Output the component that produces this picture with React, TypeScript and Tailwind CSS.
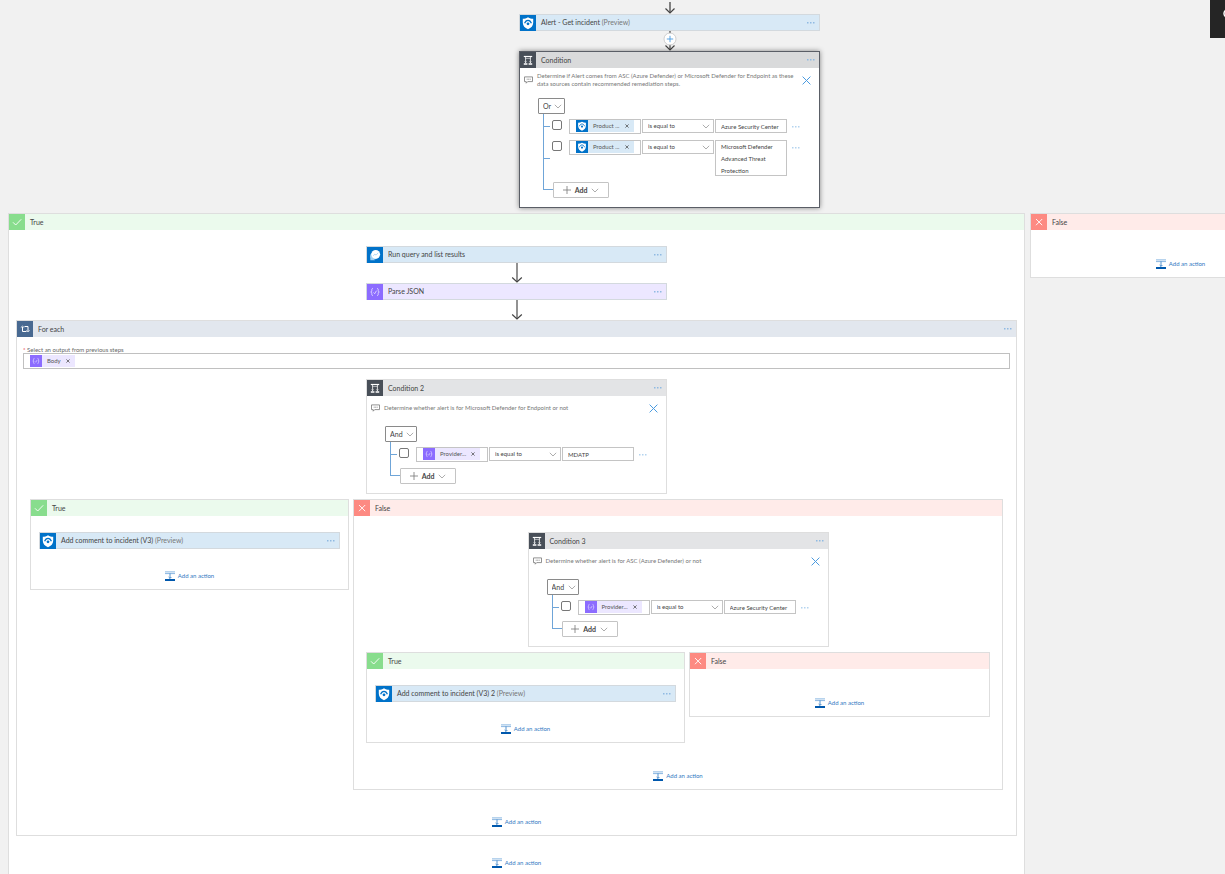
import React, { useId } from "react";

type Connector = "sentinel" | "monitor" | "json";

function SentinelIcon({ className }: { className: string }) {
  return (
    <svg viewBox="0 0 16 16" className={className} aria-hidden="true">
      <rect width="16" height="16" fill="#0072c9" />
      <path d="M8 2.2c1.6 1 3.3 1.5 5.2 1.5v4.1c0 3-2 5.200-5.200 6.500-3.200-1.300-5.200-3.500-5.200-6.500V3.700c1.900 0 3.600-.5 5.200-1.500z" fill="#fff" />
      <path d="M4.600 8.300C5.300 6.300 6.500 5.300 8 5.300s2.700 1 3.400 3" fill="none" stroke="#0072c9" strokeWidth="1.200" />
      <circle cx="8" cy="8.800" r="1.400" fill="#0072c9" />
    </svg>
  );
}

function MonitorIcon({ className }: { className: string }) {
  return (
    <svg viewBox="0 0 16 16" className={className} aria-hidden="true">
      <rect width="16" height="16" fill="#0072c9" />
      <path d="M3.300 8.500v4.700h4.700z" fill="#9fd0f2" />
      <circle cx="6.800" cy="9" r="3.600" fill="#9fd0f2" />
      <circle cx="8.700" cy="7.300" r="4.400" fill="#fff" />
      <path d="M6.300 8.800l1.500-1.700 1.300 1 2-2.300" fill="none" stroke="#9fd0f2" strokeWidth=".8" />
    </svg>
  );
}

function JsonIcon({ className }: { className: string }) {
  return (
    <svg viewBox="0 0 16 16" className={className} aria-hidden="true">
      <rect width="16" height="16" fill="#8c6cff" />
      <g fill="none" stroke="#fff" strokeWidth=".8" opacity=".85">
        <path d="M6 4.500c-1.200 0-1.200.5-1.200 1.500S4.800 8 3.700 8c1.100 0 1.100 1 1.100 2s0 1.500 1.200 1.500" />
        <path d="M10 4.500c1.200 0 1.200.5 1.200 1.500s0 2 1.100 2c-1.100 0-1.100 1-1.100 2s0 1.500-1.200 1.500" />
        <path d="M6.500 8.500l1.200 1.200 1.800-3" />
      </g>
    </svg>
  );
}

function ConditionIcon() {
  return (
    <svg viewBox="0 0 16 16" className="size-4 shrink-0" aria-hidden="true">
      <rect width="16" height="16" fill="#484f58" />
      <g fill="none" stroke="#fff">
        <path d="M3.800 4.500h8.400" strokeWidth="1.200" />
        <path d="M5.600 5v6M10.400 5v6" strokeWidth=".8" />
        <path d="M5.600 6.500h4.800" strokeWidth=".5" />
        <path d="M4.500 9.300l1.100 1.200 1.100-1.200M9.300 9.300l1.100 1.200 1.100-1.200" strokeWidth=".5" />
        <path d="M3.800 12h3.600M8.600 12h3.600" strokeWidth="1.500" />
      </g>
    </svg>
  );
}

function LoopIcon() {
  return (
    <svg viewBox="0 0 16 16" className="size-4 shrink-0" aria-hidden="true">
      <rect width="16" height="16" fill="#486991" />
      <g fill="none" stroke="#fff">
        <path d="M5.500 6v4.500h4M7.500 5.500h3.500v4.500" strokeWidth="1" />
        <path d="M3.800 6.500l1.700-1.300 1.700 1.300M9.300 9.500L11 10.800l1.700-1.300" strokeWidth=".8" />
      </g>
    </svg>
  );
}

function AddActionIcon() {
  return (
    <svg viewBox="0 0 10 10" className="h-[10px] w-[10px] shrink-0" aria-hidden="true">
      <path d="M0 .9h10M0 2.600h10" stroke="#6ba3d9" strokeWidth=".8" />
      <path d="M5 2.500v5M3.600 6L5 7.400 6.400 6" fill="none" stroke="#2f78c2" strokeWidth=".8" />
      <rect y="8" width="10" height="2" fill="#0058ad" />
    </svg>
  );
}

function Chevron({ className }: { className: string }) {
  return (
    <svg viewBox="0 0 8 5" className={className} fill="none" stroke="#8a8a8a" strokeWidth=".7" aria-hidden="true">
      <path d="M.8.8L4 4l3.200-3.200" />
    </svg>
  );
}

function MoreButton({ className = "", tone = "text-[#8fbae2]" }: { className?: string; tone?: string }) {
  return (
    <button type="button" aria-label="More commands" className={`flex shrink-0 items-center ${tone} ${className}`}>
      <svg viewBox="0 0 8 2" className="h-[2px] w-2" fill="currentColor" aria-hidden="true">
        <rect x="0" y="0" width="1.500" height="1.500" />
        <rect x="3" y="0" width="1.500" height="1.500" />
        <rect x="6" y="0" width="1.500" height="1.500" />
      </svg>
    </button>
  );
}

function ShortArrow() {
  return (
    <svg viewBox="0 0 12 14" className="h-[14px] w-3" fill="none" stroke="#444" aria-hidden="true">
      <path d="M6 2v11" strokeWidth="1.300" />
      <path d="M1.500 8.500L6 13l4.500-4.500" strokeWidth="1.200" />
    </svg>
  );
}

function Arrow() {
  return (
    <svg viewBox="0 0 12 20" className="h-5 w-3 shrink-0" fill="none" stroke="#444" aria-hidden="true">
      <path d="M6 0v19" stroke="#777" strokeWidth="1.600" />
      <path d="M1.200 14.500L6 19l4.800-4.500" strokeWidth="1.200" />
    </svg>
  );
}

function InsertStep() {
  return (
    <button type="button" aria-label="Insert a new step" className="h-5 w-[14px]">
      <svg viewBox="0 0 14 20" className="h-5 w-[14px]" fill="none" stroke="#444" aria-hidden="true">
        <path d="M7 0v19" strokeWidth="1.200" />
        <path d="M2.500 14.500L7 19l4.500-4.500" strokeWidth="1.200" />
        <circle cx="7" cy="8" r="6" fill="#fff" stroke="#c4c4c4" strokeWidth=".8" />
        <path d="M7 4.800v6.400M3.800 8h6.400" stroke="#4a9be0" strokeWidth=".9" />
      </svg>
    </button>
  );
}

const cardTone: Record<Connector, string> = {
  sentinel: "bg-[#d8e9f6]",
  monitor: "bg-[#d8e9f6]",
  json: "bg-[#ece7ff]",
};

function ConnectorIcon({ kind, className }: { kind: Connector; className: string }) {
  if (kind === "sentinel") return <SentinelIcon className={className} />;
  if (kind === "monitor") return <MonitorIcon className={className} />;
  return <JsonIcon className={className} />;
}

function ActionCard({ kind, title, preview }: { kind: Connector; title: string; preview?: boolean }) {
  return (
    <div className={`flex h-[17px] w-[301px] items-stretch border border-[#d3d9de] ${cardTone[kind]}`}>
      <ConnectorIcon kind={kind} className="-mb-px size-4 shrink-0" />
      <h3 className="flex-1 pl-[5px] text-[7px] leading-[15px] text-[#444]">
        {title} {preview && <span className="text-[#777]">(Preview)</span>}
      </h3>
      <MoreButton className="mr-1" />
    </div>
  );
}

function AddAction({ className = "" }: { className?: string }) {
  return (
    <button type="button" className={`flex h-3 items-center gap-[3px] text-[6px] leading-3 text-[#2f78c2] ${className}`}>
      <AddActionIcon />
      <span>Add an action</span>
    </button>
  );
}

function Branch({
  outcome,
  children,
  className = "",
}: {
  outcome: "True" | "False";
  children: React.ReactNode;
  className?: string;
}) {
  const ok = outcome === "True";
  return (
    <section className={`border border-[#dedede] bg-white ${className}`}>
      <header className={`flex h-4 items-center ${ok ? "bg-[#ebfaed]" : "bg-[#ffebe9]"}`}>
        <svg viewBox="0 0 16 16" className="size-4 shrink-0" fill="none" stroke="#fff" strokeWidth=".9" aria-hidden="true">
          <rect width="16" height="16" fill={ok ? "#88dd8d" : "#fd8a82"} stroke="none" />
          <path d={ok ? "M4 8.300l2.700 2.700 5.500-5.700" : "M5 5l6.200 6.200M11.200 5L5 11.200"} />
        </svg>
        <h2 className="pl-[5px] text-[7px] leading-4 text-[#444]">{outcome}</h2>
      </header>
      <div className="flex flex-col items-center px-2 pt-4 pb-[7px]">{children}</div>
    </section>
  );
}

function Token({ kind, label }: { kind: Connector; label: string }) {
  return (
    <span className={`flex h-3 shrink-0 items-center text-[6px] leading-3 text-[#555] ${cardTone[kind]}`}>
      <ConnectorIcon kind={kind} className="size-3" />
      <span className="pl-[5px]">{label}</span>
      <button type="button" aria-label={`Remove ${label}`} className="px-[5px]">
        <svg viewBox="0 0 4 4" className="size-1" stroke="#444" strokeWidth=".7" aria-hidden="true">
          <path d="M.4.4l3.200 3.200M3.600.4L.4 3.600" />
        </svg>
      </button>
    </span>
  );
}

interface Rule {
  kind: Connector;
  token: string;
  value: string;
  lines?: number;
}

function RuleRow({ rule }: { rule: Rule }) {
  const box = "w-[72px] border border-[#c4c4c4] bg-white px-[5px] text-[6px] text-[#444]";
  return (
    <div className="flex items-start">
      <span className="mr-[2px] h-px w-[6px] self-center bg-[#6fa5d8]" />
      <input type="checkbox" aria-label="Select row" className="mt-px size-[10px] appearance-none rounded-[2px] border border-[#777] bg-white" />
      <div className="ml-[7px] flex items-start gap-px">
        <div className="flex h-[15px] w-[72px] border border-[#c4c4c4] bg-white pl-[6px]">
          <Token kind={rule.kind} label={rule.token} />
          <input aria-label="Left operand" className="min-w-0 flex-1 text-[6px]" />
        </div>
        <div className="relative">
          <select aria-label="Operator" className={`${box} block h-[14px] appearance-none leading-3`}>
            <option>is equal to</option>
          </select>
          <Chevron className="pointer-events-none absolute top-[5px] right-1 h-[5px] w-2" />
        </div>
        {rule.lines ? (
          <textarea
            aria-label="Value"
            rows={rule.lines}
            defaultValue={rule.value}
            className={`${box} block h-9 resize-none overflow-hidden leading-3`}
          />
        ) : (
          <input aria-label="Value" defaultValue={rule.value} className={`${box} block h-[14px] leading-3`} />
        )}
      </div>
      <MoreButton className="ml-[5px] h-[15px]" tone="text-[#b4d4ef]" />
    </div>
  );
}

function ConditionCard({
  title,
  note,
  group,
  rules,
  selected,
}: {
  title: string;
  note: string;
  group: "And" | "Or";
  rules: Rule[];
  selected?: boolean;
}) {
  return (
    <section
      className={`w-[301px] border bg-white pb-[9px] ${
        selected ? "border-[#5a5e66] shadow-[0_0_5px_rgba(0,0,0,0.45)]" : "border-[#dedede]"
      }`}
    >
      <header className={`flex h-4 items-center ${selected ? "bg-[#d9dadb]" : "bg-[#e3e4e6]"}`}>
        <ConditionIcon />
        <h2 className="flex-1 pl-[5px] text-[7px] leading-4 text-[#444]">{title}</h2>
        <MoreButton className="mr-1" />
      </header>
      <div className="flex h-6 items-center pr-2 pl-1">
        <svg viewBox="0 0 9 8" className="mr-1 h-2 w-[9px] shrink-0" fill="none" stroke="#777" strokeWidth=".8" aria-hidden="true">
          <path d="M.5.900h8v4.700H3.700L2.200 7.200V5.600H.5z" />
          <path d="M2.700 3.200h1M4.200 3.200h1M5.700 3.200h1" />
        </svg>
        <p className="flex-1 text-[6px] leading-2 text-[#777]">{note}</p>
        <button type="button" aria-label="Delete comment" className="shrink-0">
          <svg viewBox="0 0 9 9" className="size-[9px]" stroke="#4a9be0" strokeWidth="1" aria-hidden="true">
            <path d="M.6.6l7.800 7.800M8.400.6L.6 8.400" />
          </svg>
        </button>
      </div>
      <div className="pt-[6px] pl-[18px]">
        <div className="relative w-max">
          <select
            aria-label="Group operator"
            defaultValue={group}
            className={`block h-4 appearance-none rounded-[1px] border border-[#8a8a8a] bg-white pl-1 text-[7px] leading-[14px] text-[#444] ${
              group === "And" ? "w-8" : "w-[27px]"
            }`}
          >
            <option>And</option>
            <option>Or</option>
          </select>
          <Chevron className="pointer-events-none absolute top-[6px] right-[3px] h-[5px] w-2" />
        </div>
        <div className="ml-[5px]">
          <div className="flex flex-col gap-[6px] border-l border-[#6fa5d8] pt-[5px]">
            {rules.map((rule, i) => (
              <RuleRow key={i} rule={rule} />
            ))}
          </div>
          <div className="flex items-start">
            <span className="h-[14px] w-[10px] border-b border-l border-[#6fa5d8]" />
            <button
              type="button"
              className="mt-[6px] flex h-4 w-14 items-center justify-center gap-1 rounded-[1px] border border-[#c4c4c4] bg-white text-[7px] leading-[14px] font-bold text-[#444]"
            >
              <svg viewBox="0 0 8 8" className="size-2" stroke="#777" strokeWidth=".8" aria-hidden="true">
                <path d="M4 0v8M0 4h8" />
              </svg>
              <span>Add</span>
              <Chevron className="h-[5px] w-2" />
            </button>
          </div>
        </div>
      </div>
    </section>
  );
}

function ForEach({ children }: { children: React.ReactNode }) {
  const id = useId();
  return (
    <section className="border border-[#dedede] bg-white">
      <header className="flex h-4 items-center bg-[#e2e7ee]">
        <LoopIcon />
        <h2 className="flex-1 pl-[5px] text-[7px] leading-4 text-[#444]">For each</h2>
        <MoreButton className="mr-1" />
      </header>
      <div className="px-[6px] pt-[9px]">
        <label htmlFor={id} className="block text-[6px] leading-[7px] text-[#666]">
          <span className="text-[#e81123]">* </span>Select an output from previous steps
        </label>
        <div className="flex h-4 items-center border border-[#c0c0c0] pl-[6px]">
          <Token kind="json" label="Body" />
          <input id={id} className="min-w-0 flex-1 text-[6px] outline-none" />
        </div>
      </div>
      <div className="flex flex-col items-center px-[13px] pt-[10px] pb-[7px]">{children}</div>
    </section>
  );
}

export default function App() {
  return (
    <main className="relative h-screen overflow-hidden bg-[#f1f1f1] font-['Lato','Open_Sans',sans-serif]">
      <div className="flex w-max flex-col items-center pl-2">
        <ShortArrow />
        <ActionCard kind="sentinel" title="Alert - Get incident" preview />
        <InsertStep />
        <ConditionCard
          selected
          title="Condition"
          note="Determine if Alert comes from ASC (Azure Defender) or Microsoft Defender for Endpoint as these data sources contain recommended remediation steps."
          group="Or"
          rules={[
            { kind: "sentinel", token: "Product ...", value: "Azure Security Center" },
            { kind: "sentinel", token: "Product ...", value: "Microsoft Defender Advanced Threat Protection", lines: 3 },
          ]}
        />
        <div className="flex items-start gap-[5px] pt-[5px]">
          <section>
            <Branch outcome="True" className="[&>div]:px-[7px]">
              <ActionCard kind="monitor" title="Run query and list results" />
              <Arrow />
              <ActionCard kind="json" title="Parse JSON" />
              <Arrow />
              <ForEach>
                <ConditionCard
                  title="Condition 2"
                  note="Determine whether alert is for Microsoft Defender for Endpoint or not"
                  group="And"
                  rules={[{ kind: "json", token: "Provider...", value: "MDATP" }]}
                />
                <div className="flex items-start gap-1 pt-[5px]">
                  <Branch outcome="True">
                    <ActionCard kind="sentinel" title="Add comment to incident (V3)" preview />
                    <AddAction className="mt-[21px]" />
                  </Branch>
                  <Branch outcome="False" className="[&>div]:px-3">
                    <ConditionCard
                      title="Condition 3"
                      note="Determine whether alert is for ASC (Azure Defender) or not"
                      group="And"
                      rules={[{ kind: "json", token: "Provider...", value: "Azure Security Center" }]}
                    />
                    <div className="flex items-start gap-1 pt-[5px]">
                      <Branch outcome="True">
                        <ActionCard kind="sentinel" title="Add comment to incident (V3) 2" preview />
                        <AddAction className="mt-[21px]" />
                      </Branch>
                      <Branch outcome="False" className="w-[301px]">
                        <AddAction className="mt-3" />
                      </Branch>
                    </div>
                    <AddAction className="mt-[27px]" />
                  </Branch>
                </div>
                <AddAction className="mt-[26px]" />
              </ForEach>
              <AddAction className="mt-[21px]" />
            </Branch>
          </section>
          <Branch outcome="False" className="w-[301px]">
            <AddAction className="mt-3" />
          </Branch>
        </div>
      </div>
      <button type="button" aria-label="Search" className="absolute top-0 right-0 h-[38px] w-[15px] overflow-hidden bg-[#252525]">
        <svg viewBox="0 0 15 38" className="h-[38px] w-[15px]" fill="none" stroke="#fff" strokeWidth="1.500" aria-hidden="true">
          <circle cx="18" cy="13.500" r="4" />
        </svg>
      </button>
    </main>
  );
}
